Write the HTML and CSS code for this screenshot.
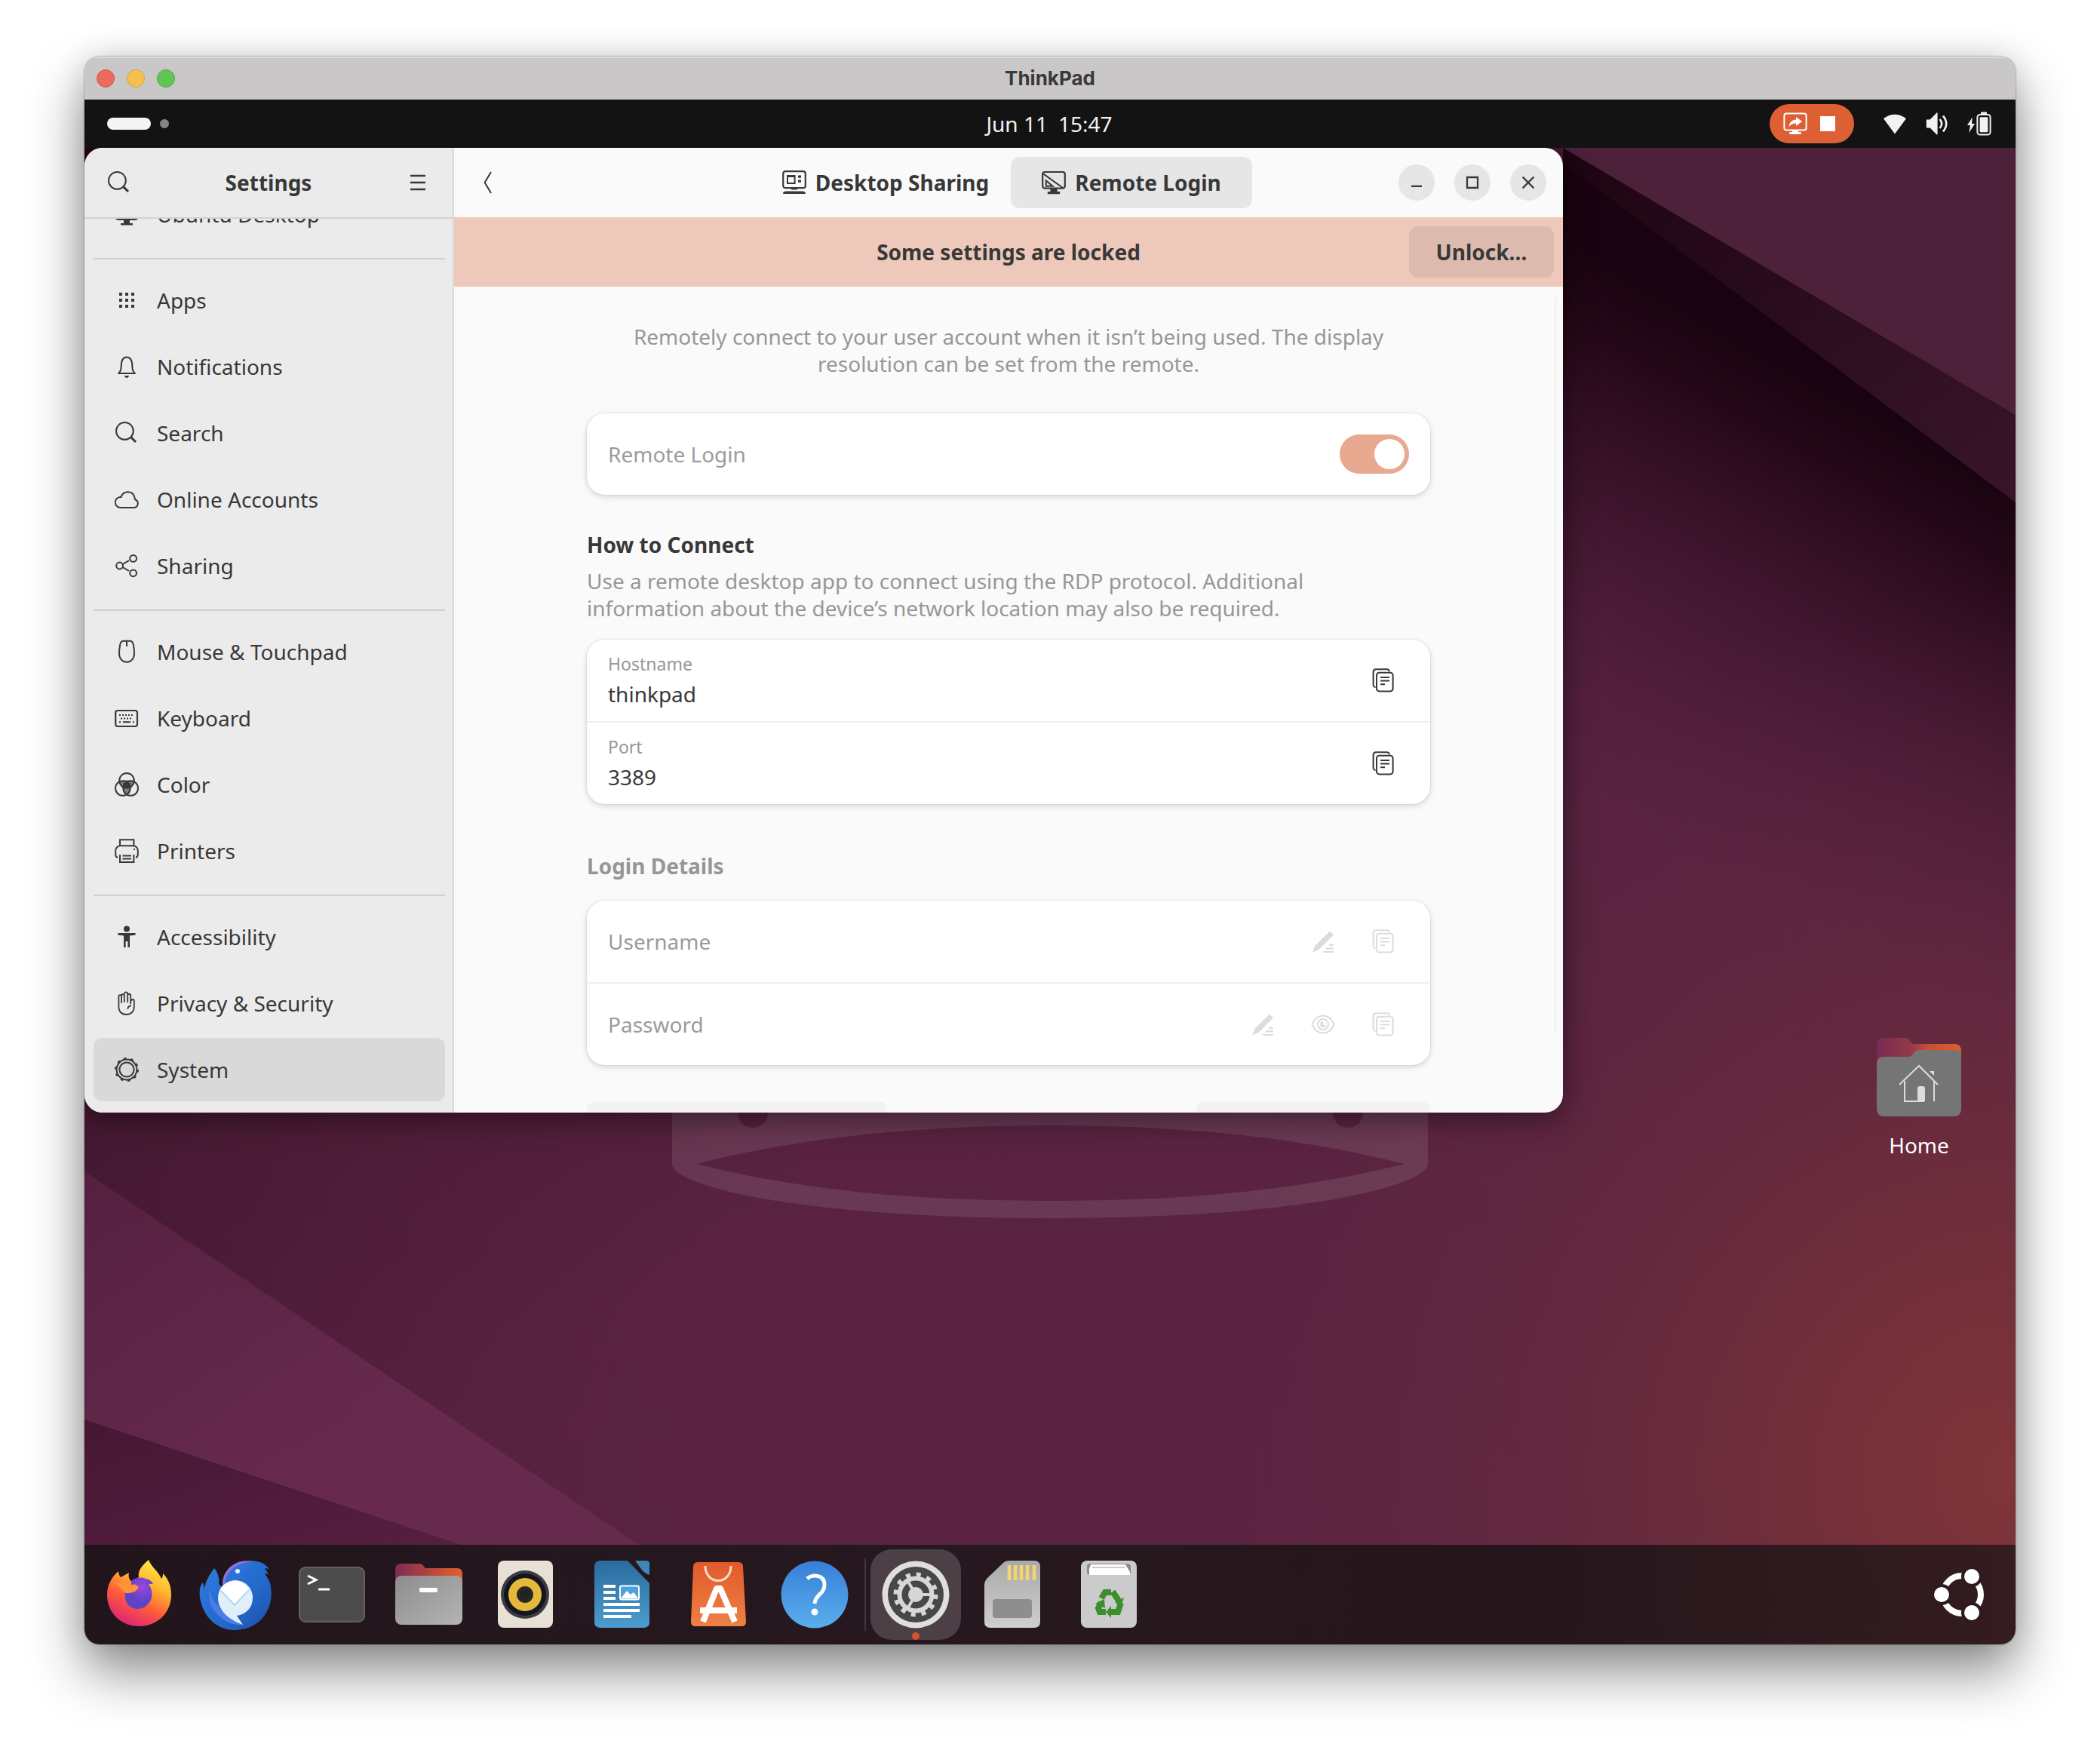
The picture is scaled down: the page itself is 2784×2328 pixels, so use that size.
FILE: index.html
```html
<!DOCTYPE html>
<html lang="en">
<head>
<meta charset="utf-8">
<title>ThinkPad</title>
<link rel="stylesheet" href="styles.css">
</head>
<body>
<svg class="defs" aria-hidden="true">
  <defs>
    <symbol id="i-search" viewBox="0 0 16 16"><circle cx="6.7" cy="6.7" r="5.7" fill="none" stroke="currentColor"/><path d="M10.8 10.8 14 14" stroke="currentColor" stroke-width="1.5"/></symbol>
    <symbol id="i-screen" viewBox="0 0 16 16"><path d="M2.5 1.5h11a1.5 1.5 0 0 1 1.500 1.500v7a1.500 1.500 0 0 1-1.500 1.500h-11A1.500 1.500 0 0 1 1 10V3a1.500 1.500 0 0 1 1.500-1.500z" fill="none" stroke="currentColor"/><path d="M1 9.500h14v2H1zM6 12h4v2h2v1.300H4V14h2z" fill="currentColor"/></symbol>
    <symbol id="i-copy" viewBox="0 0 16 16"><rect x="3.500" y="2.900" width="10.800" height="12.300" rx="1.700" fill="none" stroke="currentColor"/><path d="M2.800 12.500A1.500 1.500 0 0 1 1.300 11V2.300A1.800 1.800 0 0 1 3 .6h7.300a1.600 1.600 0 0 1 1.600 1.500" fill="none" stroke="currentColor"/><path d="M6 6h6M6 8.300h6M6 10.600h3" stroke="currentColor"/></symbol>
    <symbol id="i-edit" viewBox="0 0 16 16"><path d="M12.500 1.200 15 3.600 5.500 13.300 1 15.400 2.700 10.900z" fill="currentColor"/><path d="M8 15h7M10 12.700h5M12 10.400h3" stroke="currentColor" stroke-width="1.100"/></symbol>
  </defs>
</svg>

<main class="stage">
<section class="remote" aria-label="Remote screen">
  <header class="titlebar">
    <div class="lights">
      <button class="light light-red" aria-label="Close"></button>
      <button class="light light-yellow" aria-label="Minimize"></button>
      <button class="light light-green" aria-label="Zoom"></button>
    </div>
    <h1 class="titlebar-name">ThinkPad</h1>
    <div></div>
  </header>

  <div class="topbar">
    <button class="workspaces" aria-label="Activities"><span class="pill"></span><span class="dot"></span></button>
    <button class="clock"><span>Jun 11</span><span>15:47</span></button>
    <div class="status">
      <button class="sharing" aria-label="Stop screen sharing">
        <svg class="icon" viewBox="0 0 16 16"><rect x=".7" y="1.200" width="14.600" height="11" rx="1.500" fill="none" stroke="#fff"/><path d="M6 12h4v1.500h1.800V15H4.200v-1.500H6z" fill="#fff"/><path d="M8.500 3.500 12.500 6.500 8.500 9.500V7.800C6.300 7.800 5 8.500 3.800 10.200 4 7.300 5.600 5.400 8.500 5.200z" fill="#fff"/></svg>
        <span class="stop"></span>
      </button>
      <button class="tray" aria-label="System menu">
        <svg class="icon" viewBox="0 0 16 16"><path d="M8 14.700.5 4.600Q8-.8 15.500 4.600z" fill="#f2f2f2"/></svg>
        <svg class="icon" viewBox="0 0 16 16"><path d="M1.200 5.500h2.300L8 1v14l-4.500-4.500H1.200z" fill="#f2f2f2" stroke="#f2f2f2" stroke-width=".6" stroke-linejoin="round"/><path d="M9.800 5q2.600 3 0 6M12 2.800q4.200 5.200 0 10.400" fill="none" stroke="#f2f2f2" stroke-width="1.300"/></svg>
        <svg class="icon" viewBox="0 0 16 16"><path d="M3.400 3.800 0 9h2l-.8 5L5 8H3z" fill="#f2f2f2"/><rect x="6.700" y="2" width="8.600" height="13.300" rx="1.800" fill="none" stroke="#f2f2f2"/><rect x="8.300" y="3.600" width="5.400" height="10" rx=".6" fill="#f2f2f2"/><path d="M9 .3h4v1.300H9z" fill="#f2f2f2"/></svg>
      </button>
    </div>
  </div>

  <div class="desktop">
    <svg class="wallpaper" viewBox="0 0 2560 1852" preserveAspectRatio="none" aria-hidden="true">
      <defs>
        <linearGradient id="w-base" x1="0" y1="0" x2="1" y2="1"><stop offset="0" stop-color="#2a0318"/><stop offset=".32" stop-color="#45182f"/><stop offset=".55" stop-color="#582240"/><stop offset="1" stop-color="#5c2643"/></linearGradient>
        <radialGradient id="w-warm" gradientUnits="userSpaceOnUse" cx="2560" cy="1760" r="1150"><stop offset="0" stop-color="#803539"/><stop offset=".25" stop-color="#763139" stop-opacity=".85"/><stop offset="1" stop-color="#5a2440" stop-opacity="0"/></radialGradient>
        <linearGradient id="w-deep" gradientUnits="userSpaceOnUse" x1="2300" y1="300" x2="1980" y2="860"><stop offset="0" stop-color="#190310"/><stop offset=".15" stop-color="#1f0513" stop-opacity=".9"/><stop offset=".6" stop-color="#3a122a" stop-opacity=".5"/><stop offset="1" stop-color="#4a1a35" stop-opacity="0"/></linearGradient>
        <linearGradient id="w-left" gradientUnits="userSpaceOnUse" x1="0" y1="1300" x2="700" y2="1150"><stop offset="0" stop-color="#3f1530" stop-opacity=".35"/><stop offset="1" stop-color="#582240" stop-opacity="0"/></linearGradient>
        <linearGradient id="w-tri" x1="0" y1="0" x2="1" y2="1"><stop offset="0" stop-color="#552040"/><stop offset=".6" stop-color="#672a4e"/><stop offset="1" stop-color="#662a4d"/></linearGradient>
        <linearGradient id="w-tri2" x1="0" y1="0" x2="1" y2="1"><stop offset="0" stop-color="#451733"/><stop offset="1" stop-color="#571f41"/></linearGradient>
        <linearGradient id="w-band" x1="0" y1="0" x2="1" y2="1"><stop offset="0" stop-color="#1e0412"/><stop offset=".6" stop-color="#2d0f20"/><stop offset="1" stop-color="#3a152a"/></linearGradient>
      </defs>
      <rect width="2560" height="1852" fill="url(#w-base)"/>
      <path d="M1960 0H2560V1300L1960 900z" fill="url(#w-deep)"/>
      <rect width="2560" height="1852" fill="url(#w-warm)"/>
      <rect y="1000" width="1000" height="852" fill="url(#w-left)"/>
      <path d="M1960 0H2560V470L1960 20z" fill="url(#w-band)"/>
      <path d="M1960 0H2560V354z" fill="#4e213b"/>
      <path d="M0 1357 735 1852H0z" fill="url(#w-tri)"/>
      <path d="M0 1686 500 1852H0z" fill="url(#w-tri2)"/>
      <path fill="#fff" fill-opacity=".1" fill-rule="evenodd" d="M779 1200H1781V1347C1781 1375 1620 1419 1280 1419S779 1375 779 1347zM812 1347C960 1385 1120 1396 1280 1396S1600 1385 1750 1347C1600 1309 1440 1296 1280 1296S960 1309 812 1347zM866 1279a20 20 0 0 0 40 0 20 20 0 0 0-40 0zM1655 1279a20 20 0 0 0 40 0 20 20 0 0 0-40 0z"/>
    </svg>

    <section class="settings" aria-label="Settings">
      <aside class="sidebar">
        <header class="side-head">
          <button class="flat" aria-label="Search"><svg class="icon"><use href="#i-search"/></svg></button>
          <h2 class="side-title">Settings</h2>
          <button class="flat" aria-label="Menu"><svg class="icon" viewBox="0 0 16 16"><path d="M3 3.500h10M3 8h10M3 12.500h10" stroke="currentColor" stroke-width="1.200"/></svg></button>
        </header>
        <nav class="nav">
          <a class="nav-row" href="#"><svg class="icon"><use href="#i-screen"/></svg>Ubuntu Desktop</a>
          <hr class="rule">
          <a class="nav-row" href="#"><svg class="icon" viewBox="0 0 16 16"><path d="M3 3h2v2H3zM7 3h2v2H7zM11 3h2v2h-2zM3 7h2v2H3zM7 7h2v2H7zM11 7h2v2h-2zM3 11h2v2H3zM7 11h2v2H7zM11 11h2v2h-2z" fill="currentColor"/></svg>Apps</a>
          <a class="nav-row" href="#"><svg class="icon" viewBox="0 0 16 16"><path d="M2.500 12.500h11c-1.300-1-1.800-2.300-1.800-4.500C11.700 4 10.500 1.700 8 1.700S4.300 4 4.300 8c0 2.200-.5 3.500-1.800 4.500z" fill="none" stroke="currentColor" stroke-linejoin="round"/><path d="M6.300 14h3.400Q9 15.600 8 15.600T6.300 14z" fill="currentColor"/></svg>Notifications</a>
          <a class="nav-row" href="#"><svg class="icon"><use href="#i-search"/></svg>Search</a>
          <a class="nav-row" href="#"><svg class="icon" viewBox="0 0 16 16"><path d="M3.500 13.500h9.200a2.800 2.800 0 0 0 .9-5.400C13.300 7.500 13.300 7 13 6a4.600 4.600 0 0 0-8.700.5 3.500 3.500 0 0 0-.8 7z" fill="none" stroke="currentColor"/></svg>Online Accounts</a>
          <a class="nav-row" href="#"><svg class="icon" viewBox="0 0 16 16"><g fill="none" stroke="currentColor"><circle cx="3.300" cy="8" r="2.200"/><circle cx="12.300" cy="3.200" r="2.200"/><circle cx="12.300" cy="12.900" r="2.200"/><path d="M5.300 7 9.500 4.600M5.300 9l4.200 2.400"/></g></svg>Sharing</a>
          <hr class="rule">
          <a class="nav-row" href="#"><svg class="icon" viewBox="0 0 16 16"><path d="M5.700.9h4.600c1.500 0 2 1 2.300 3.500.3 2 .4 3.200.4 5a5 5.500 0 0 1-10 0c0-1.800.1-3 .4-5C3.700 1.900 4.200.9 5.700.9z" fill="none" stroke="currentColor"/><path d="M8 1v3.500" stroke="currentColor"/></svg>Mouse &amp; Touchpad</a>
          <a class="nav-row" href="#"><svg class="icon" viewBox="0 0 16 16"><rect x=".6" y="3" width="14.400" height="10.500" rx="1.500" fill="none" stroke="currentColor" stroke-width="1.100"/><path d="M3 6h10M4 8.300h8M3 10.600h1M12 10.600h1" stroke="currentColor" stroke-dasharray="1 1"/><path d="M5.500 10.600h5" stroke="currentColor"/></svg>Keyboard</a>
          <a class="nav-row" href="#"><svg class="icon" viewBox="0 0 16 16"><path d="M3.500 6.200Q8 4 12.500 6.200L10.800 10.500 10 14H6l-.8-3.500z" fill="currentColor" fill-opacity=".6"/><path d="M5.500 7h5L9.500 10.500h-3z" fill="currentColor"/><g fill="none" stroke="currentColor"><circle cx="8" cy="5.400" r="4.900"/><circle cx="5.400" cy="10.500" r="4.900"/><circle cx="10.600" cy="10.500" r="4.900"/></g></svg>Color</a>
          <a class="nav-row" href="#"><svg class="icon" viewBox="0 0 16 16"><g fill="none" stroke="currentColor"><path d="M3.500 4.500V.6h9.200v3.900M2 12.500C1 12.200.6 11.500.6 10.500V8A3.300 3.300 0 0 1 3.600 4.600h8.800a3.300 3.300 0 0 1 3 3.400v2.500c0 1-.4 1.700-1.400 2M3.500 10.500v5h9.200v-5M5.200 11.300h5.800M5.200 13.300h5.800"/></g><path d="M12.500 6.500h1v1h-1z" fill="currentColor"/></svg>Printers</a>
          <hr class="rule">
          <a class="nav-row" href="#"><svg class="icon" viewBox="0 0 16 16"><circle cx="8" cy="2.800" r="2" fill="currentColor"/><path d="M2.200 5.500h11.600v1.200L10 7.300V15H8.700v-4H7.300v4H6V7.300l-3.800-.6z" fill="currentColor"/></svg>Accessibility</a>
          <a class="nav-row" href="#"><svg class="icon" viewBox="0 0 16 16"><path d="M4.500 8V3.500a.9.900 0 0 0-1.800 0v7c0 3 2 5 5 5s5.200-2 5.200-5V6.500c0-1.400-1.700-1.400-1.700 0M4.500 3.300c0-1.600 1.900-1.600 1.900 0V7.500M6.400 2c0-1.700 2.200-1.700 2.200 0v5.500M8.600 3c0-1.500 2-1.500 2 0V8.500M11 9.500c-1.500.3-2.200 1-2.400 2.300" fill="none" stroke="currentColor" stroke-width=".9"/></svg>Privacy &amp; Security</a>
          <a class="nav-row nav-row-active" href="#" aria-current="page"><svg class="icon" viewBox="0 0 16 16"><g fill="none" stroke="currentColor"><circle cx="8" cy="8" r="4.800"/><circle cx="8" cy="8" r="6.700"/><circle cx="8" cy="8" r="7.300" stroke-width="1.400" stroke-dasharray="1.800 2.790"/></g></svg>System</a>
        </nav>
      </aside>

      <div class="panel">
        <header class="panel-head">
          <button class="flat" aria-label="Back"><svg class="icon" viewBox="0 0 16 16"><path d="M10.500 1 6.300 8l4.200 7" fill="none" stroke="currentColor"/></svg></button>
          <div class="tabs" role="tablist">
            <button class="tab" role="tab"><svg class="icon" viewBox="0 0 16 16"><rect x=".6" y=".6" width="14.800" height="11" rx="1.500" fill="none" stroke="currentColor" stroke-width="1.100"/><path d="M3 3h5.800v6H3zM4 4.500V8h3.800V4.500z" fill="currentColor" fill-rule="evenodd"/><path d="M10.500 3.200h2v1.700h-2zM10.500 6.200h2v1.700h-2zM6 11.800h4v1H6zM.5 15.500q0-1.800 2-1.800h11q2 0 2 1.800z" fill="currentColor"/></svg>Desktop Sharing</button>
            <button class="tab tab-active" role="tab" aria-selected="true"><svg class="icon" viewBox="0 0 16 16"><rect x=".6" y="1" width="14.800" height="10.800" rx="1.500" fill="none" stroke="currentColor" stroke-width="1.100"/><path d="M1.200 2.300 14 11.500" stroke="currentColor"/><path d="M2.900 6.700v3.700h4.400z" fill="none" stroke="currentColor"/><path d="M5.700 12h4.600v2h1.800v1.600H3.900V14h1.800z" fill="currentColor"/></svg>Remote Login</button>
          </div>
          <div class="controls">
            <button class="control" aria-label="Minimize"><svg class="icon icon-small" viewBox="0 0 16 16"><path d="M4 10.800h8" stroke="currentColor" stroke-width="1.300"/></svg></button>
            <button class="control" aria-label="Maximize"><svg class="icon icon-small" viewBox="0 0 16 16"><path d="M4 4h8v8H4z" fill="none" stroke="currentColor" stroke-width="1.300"/></svg></button>
            <button class="control" aria-label="Close"><svg class="icon icon-small" viewBox="0 0 16 16"><path d="m3.800 3.800 8.400 8.400M12.200 3.800l-8.400 8.400" stroke="currentColor" stroke-width="1.300"/></svg></button>
          </div>
        </header>

        <div class="banner">
          <p class="banner-text">Some settings are locked</p>
          <button class="unlock">Unlock…</button>
        </div>

        <div class="content">
          <p class="intro">Remotely connect to your user account when it isn’t being used. The display resolution can be set from the remote.</p>

          <div class="card">
            <div class="row">
              <label class="row-label" for="remote-login">Remote Login</label>
              <input class="switch" id="remote-login" type="checkbox" checked disabled>
            </div>
          </div>

          <h3 class="group-title">How to Connect</h3>
          <p class="group-text">Use a remote desktop app to connect using the RDP protocol. Additional information about the device’s network location may also be required.</p>
          <div class="card">
            <div class="row">
              <div class="pair"><span class="pair-key">Hostname</span><span class="pair-value">thinkpad</span></div>
              <button class="act" aria-label="Copy hostname"><svg class="icon"><use href="#i-copy"/></svg></button>
            </div>
            <div class="row">
              <div class="pair"><span class="pair-key">Port</span><span class="pair-value">3389</span></div>
              <button class="act" aria-label="Copy port"><svg class="icon"><use href="#i-copy"/></svg></button>
            </div>
          </div>

          <h3 class="group-title group-title-off">Login Details</h3>
          <div class="card">
            <div class="row">
              <label class="row-label" for="username">Username</label>
              <input class="entry" id="username" type="text" disabled>
              <button class="act" disabled aria-label="Edit username"><svg class="icon"><use href="#i-edit"/></svg></button>
              <button class="act" disabled aria-label="Copy username"><svg class="icon"><use href="#i-copy"/></svg></button>
            </div>
            <div class="row">
              <label class="row-label" for="password">Password</label>
              <input class="entry" id="password" type="password" disabled>
              <button class="act" disabled aria-label="Edit password"><svg class="icon"><use href="#i-edit"/></svg></button>
              <button class="act" disabled aria-label="Show password"><svg class="icon" viewBox="0 0 16 16"><g fill="none" stroke="currentColor"><path d="M.7 8C2.200 4.500 4.800 2.200 8 2.200S13.800 4.500 15.300 8C13.800 11.500 11.200 13.800 8 13.800S2.200 11.500.7 8z"/><circle cx="8" cy="8" r="3.500"/></g><path d="M8 6v2.500h2A2 2 0 1 1 8 6z" fill="currentColor"/></svg></button>
              <button class="act" disabled aria-label="Copy password"><svg class="icon"><use href="#i-copy"/></svg></button>
            </div>
          </div>

          <div class="foot">
            <button class="foot-button foot-wide" disabled aria-label="Verify encryption"></button>
            <button class="foot-button" disabled aria-label="Generate password"></button>
          </div>
        </div>
      </div>
    </section>

    <a class="home" href="#">
      <svg class="home-icon" viewBox="0 0 112 104" aria-hidden="true">
        <defs><linearGradient id="h-back"><stop offset="0" stop-color="#7a2b52"/><stop offset=".4" stop-color="#92384a"/><stop offset=".6" stop-color="#c64f35"/><stop offset="1" stop-color="#dd5e2c"/></linearGradient></defs>
        <path d="M8 0H38Q42 0 44 4L48 8H104Q112 8 112 18V40H0V10Q0 0 8 0z" fill="url(#h-back)"/>
        <path d="M10 25H42Q47 24 50 19 52 16 56 16H104Q112 16 112 24V94Q112 104 102 104H10Q0 104 0 94V34Q0 25 10 25z" fill="#757575"/>
        <path d="M30 62 56 37 81 62M37 57V84H63M76 57V84" fill="none" stroke="#dcdcdc" stroke-width="2"/>
        <path d="M54 84V67Q54 64 57 64H61Q64 64 64 67V84zM70 44H76V50z" fill="#dcdcdc"/>
      </svg>
      <span>Home</span>
    </a>
  </div>

  <footer class="dock">
    <div class="dock-group">
      <button class="app" aria-label="Firefox"><svg class="app-icon" viewBox="0 0 96 96"><defs><linearGradient id="ff1" x1=".8" y1="0" x2=".3" y2="1"><stop offset="0" stop-color="#fff04a"/><stop offset=".35" stop-color="#ffb52e"/><stop offset=".65" stop-color="#ff5a3c"/><stop offset="1" stop-color="#dd2277"/></linearGradient><radialGradient id="ff2" cx=".6" cy=".3"><stop offset="0" stop-color="#a044e0"/><stop offset="1" stop-color="#5a44c8"/></radialGradient></defs><path d="M61 2C65 12 74 17 78 27 80 25 80 22 80 20 88 28 91 38 91 48 91 73 72 90 48 90S6 72 6 48C6 34 13 24 21 17 21 20 22 23 24 25L35 19C34 24 35 28 38 30 44 27 47 27 48 24 46 16 54 8 61 2z" fill="url(#ff1)"/><path d="M38 30Q47 23 57 27 64 28 67 34L61 34Q68 44 64 55 58 67 47 67C34 67 28 56 30 45Q42 45 48 39 45 33 38 35z" fill="url(#ff2)"/><path d="M18 33Q30 31 38 36 45 38 47 40 44 45 35 46 30 47 28 43z" fill="#ff9434"/></svg></button>
      <button class="app" aria-label="Thunderbird"><svg class="app-icon" viewBox="0 0 96 96"><defs><linearGradient id="tb" x1="0" y1="0" x2="1" y2="1"><stop offset="0" stop-color="#2f7ce0"/><stop offset=".6" stop-color="#2468cc"/><stop offset="1" stop-color="#1d4ea8"/></linearGradient></defs><path d="M31 38C34 14 54 0 76 4 84 5 89 9 93 14L87 13 92 21 87 20 93 30C97 40 97 58 90 70 82 86 66 95 47 95 22 95 5 76 1 52 0 42 1 36 5 32L7 40C9 28 15 20 20 13 26 20 27 28 26 34z" fill="url(#tb)"/><path d="M31 36C30 14 50 0 70 4 52 7 42 16 38 34z" fill="#8f6fe0"/><path d="M34 36C34 18 50 5 70 5 60 14 58 24 50 30z" fill="#2c73d8"/><path d="M48 29A23 23 0 0 1 71 52C71 66 62 74 50 76L58 88C42 84 25 70 25 52A23 23 0 0 1 48 29z" fill="#e1effc"/><path d="M28 41 47 60 66 41Q60 31 48 30 34 31 28 41z" fill="#fff"/><path d="M29 43 47 62 66 42" fill="none" stroke="#b9d4f2" stroke-width="2"/><path d="M14 42Q10 62 26 76 40 90 58 88 36 80 26 64 16 54 14 42z" fill="#4a7ee4"/><circle cx="51" cy="17" r="3" fill="#e8f3fd"/></svg></button>
      <button class="app" aria-label="Terminal"><svg class="app-icon" viewBox="0 0 96 96"><rect x="5" y="12" width="86" height="72" rx="8" fill="#4c4c4c" stroke="#626262" stroke-width="2"/><path d="M16 23 27 28.500 16 34" fill="none" stroke="#fff" stroke-width="3"/><path d="M30 41H45" stroke="#fff" stroke-width="3"/></svg></button>
      <button class="app" aria-label="Files"><svg class="app-icon" viewBox="0 0 96 96"><defs><linearGradient id="fb"><stop offset="0" stop-color="#7d2b52"/><stop offset=".5" stop-color="#b2453d"/><stop offset="1" stop-color="#e4602c"/></linearGradient><linearGradient id="fg" x2="1" y2="1"><stop offset="0" stop-color="#8d8d8d"/><stop offset="1" stop-color="#b4b4b4"/></linearGradient></defs><path d="M12 7H36Q40 7 42 11L44 13H86Q93 13 93 21V40H4V15Q4 7 12 7z" fill="url(#fb)"/><rect x="4" y="23" width="89" height="65" rx="8" fill="url(#fg)"/><rect x="36" y="39" width="24" height="6" rx="2" fill="#fff"/></svg></button>
      <button class="app" aria-label="Rhythmbox"><svg class="app-icon" viewBox="0 0 96 96"><rect x="12" y="3" width="73" height="89" rx="8" fill="#e6e1d4"/><circle cx="48" cy="48" r="32" fill="#3a3b42"/><circle cx="48" cy="48" r="28" fill="#14161f"/><circle cx="48" cy="48" r="22" fill="#e6b93c"/><circle cx="48" cy="48" r="11" fill="#2a2a22"/><circle cx="48" cy="48" r="7" fill="#222"/></svg></button>
      <button class="app" aria-label="LibreOffice Writer"><svg class="app-icon" viewBox="0 0 96 96"><defs><linearGradient id="lw" x2="0" y2="1"><stop offset="0" stop-color="#2a6b9e"/><stop offset="1" stop-color="#4c9dcf"/></linearGradient></defs><path d="M20 3H56L85 33V84Q85 92 77 92H20Q12 92 12 84V11Q12 3 20 3z" fill="url(#lw)"/><path d="M66 3H81Q85 3 85 7V22Q78 20 74 14z" fill="#3f86b8"/><path d="M24 37H40M24 45H40M24 53H40M24 61H72M24 69H72M24 77H61" stroke="#fff" stroke-width="4"/><rect x="46" y="36.500" width="25" height="18" rx="2" fill="#4aa3dc" stroke="#fff" stroke-width="2"/><path d="M47 53 55 43 60 48 64 45 70 53z" fill="#fff"/></svg></button>
      <button class="app" aria-label="App Center"><svg class="app-icon" viewBox="0 0 96 96"><defs><linearGradient id="ac" x2="0" y2="1"><stop offset="0" stop-color="#e25a2a"/><stop offset="1" stop-color="#ee8145"/></linearGradient></defs><path d="M21 5H75Q81 5 81 11L85 84Q85 90 79 90H18Q12 90 12 84L15 11Q15 5 21 5z" fill="url(#ac)"/><path d="M31 10C31 36 65 36 65 10" fill="none" stroke="#f8dccf" stroke-width="3"/><path d="M28 84 46 40H51L70 84M24 69H73" fill="none" stroke="#fff" stroke-width="8" stroke-linejoin="round"/></svg></button>
      <button class="app" aria-label="Help"><svg class="app-icon" viewBox="0 0 96 96"><defs><linearGradient id="hp" x2="0" y2="1"><stop offset="0" stop-color="#387fd8"/><stop offset="1" stop-color="#5aaeee"/></linearGradient></defs><circle cx="48" cy="48" r="44.500" fill="url(#hp)"/><path d="M38 27C45 21 61 21 61 35 61 48 49 47 48 60" fill="none" stroke="#fff" stroke-width="5"/><circle cx="48" cy="71" r="4.500" fill="#fff"/></svg></button>
    </div>
    <span class="dock-rule"></span>
    <div class="dock-group">
      <button class="app app-active" aria-label="Settings"><svg class="app-icon" viewBox="0 0 96 96"><circle cx="48" cy="48" r="44.500" fill="#dedede"/><circle cx="48" cy="48" r="37" fill="#474747"/><circle cx="48" cy="48" r="21.500" fill="none" stroke="#d6d6d6" stroke-width="6"/><circle cx="48" cy="48" r="26.500" fill="none" stroke="#d6d6d6" stroke-width="6" stroke-dasharray="6 7.875"/><circle cx="48" cy="48" r="10" fill="#d6d6d6"/><path d="M48 48H68M48 48 38 31M48 48 38 65" stroke="#d6d6d6" stroke-width="4"/></svg></button>
      <button class="app" aria-label="SD card"><svg class="app-icon" viewBox="0 0 96 96"><defs><linearGradient id="sd" x2="0" y2="1"><stop offset="0" stop-color="#a9a9a9"/><stop offset="1" stop-color="#cfcfcf"/></linearGradient></defs><path d="M44 3H77Q85 3 85 11V84Q85 92 77 92H19Q11 92 11 84V36Q11 30 15 26L36 6Q39 3 44 3z" fill="url(#sd)"/><path d="M44 9V29M52 9V29M60 9V29M68 9V29M77 9V29" stroke="#f7d56c" stroke-width="4.500"/><rect x="22" y="54" width="52" height="25" rx="4" fill="#8e8e8e"/></svg></button>
      <button class="app" aria-label="Trash"><svg class="app-icon" viewBox="0 0 96 96"><rect x="11" y="3" width="74" height="89" rx="8" fill="#cbcbcb"/><rect x="19" y="7" width="58" height="15" rx="4" fill="#8b8b8b"/><path d="M24 8H70L76 18V22H22V14z" fill="#fff"/><path d="M26 12H70" stroke="#bdbdbd" stroke-width="1.500"/><g fill="none" stroke="#3d8f2c" stroke-width="8"><path d="M38 53 43 45H51M53 44 61 56"/><path d="M64 59 60 71H50"/><path d="M44 71H36L34 66 38 58"/></g><path d="M56 58 68 52 64 64zM51 63V79L44 71zM30 60 42 54 43 66z" fill="#3d8f2c"/></svg></button>
    </div>
    <button class="app app-end" aria-label="Show apps"><svg class="ubuntu" viewBox="0 0 72 72"><circle cx="39" cy="36" r="25" fill="none" stroke="#fff" stroke-width="8"/><g fill="#fff" stroke="#2e1a1e" stroke-width="4"><circle cx="12" cy="36" r="12"/><circle cx="52" cy="12" r="12"/><circle cx="52" cy="60" r="12"/></g></svg></button>
  </footer>
</section>
</main>
</body>
</html>
```
FILE: styles.css
```css
* { box-sizing: border-box; }

body {
  margin: 0;
  background: #fff;
  color: #383838;
  font: 28px/36px "Noto Sans", "Open Sans", sans-serif;
}

h1, h2, h3, p { margin: 0; font-size: inherit; line-height: inherit; }

button {
  display: flex;
  align-items: center;
  justify-content: center;
  padding: 0;
  border: 0;
  background: none;
  color: inherit;
  font: inherit;
}

a { color: inherit; text-decoration: none; }

.defs { position: absolute; width: 0; height: 0; }
.icon { width: 32px; height: 32px; flex: none; }
.icon-small { width: 28px; height: 28px; }

.stage {
  display: flex;
  min-height: 100vh;
  padding: 75px 112px 148px;
}

.remote {
  display: flex;
  flex: 1;
  flex-direction: column;
  overflow: hidden;
  border-radius: 20px;
  box-shadow: 0 0 2px rgba(0, 0, 0, .6), 0 36px 72px rgba(0, 0, 0, .46), 0 0 40px rgba(0, 0, 0, .12);
}

/* Window title bar */
.titlebar {
  display: grid;
  grid-template-columns: 1fr auto 1fr;
  align-items: center;
  height: 57px;
  padding: 0 16px 2px;
  background: #c9c7c8;
  border-top: 2px solid #dcdbdb;
}

.lights { display: flex; gap: 16px; }
.light { width: 24px; height: 24px; border-radius: 50%; }
.light-red { background: #ed6a5e; border: 1px solid #d5574c; }
.light-yellow { background: #f5bf4f; border: 1px solid #d9a33d; }
.light-green { background: #61c554; border: 1px solid #4fa943; }

.titlebar-name { font: 700 26px/32px Inter, sans-serif; color: #3a3939; }

/* Top bar */
.topbar {
  display: grid;
  grid-template-columns: 1fr auto 1fr;
  align-items: center;
  height: 64px;
  padding: 0 32px 0 30px;
  background: #131313;
  color: #f2f2f2;
}

.workspaces { justify-self: start; gap: 12px; }
.pill { width: 58px; height: 16px; border-radius: 8px; background: #f4f4f4; }
.dot { width: 12px; height: 12px; border-radius: 50%; background: #868686; }
.clock { gap: 14px; }
.status { display: flex; justify-self: end; align-items: center; gap: 38px; }

.sharing {
  justify-content: flex-start;
  gap: 17px;
  width: 112px;
  height: 52px;
  padding-left: 18px;
  border-radius: 26px;
  background: #dd5f34;
}

.stop { width: 20px; height: 20px; background: #fff; }
.tray { gap: 24px; }

/* Desktop */
.desktop { position: relative; flex: 1; background: #582240; overflow: hidden; }
.wallpaper { position: absolute; inset: 0; width: 100%; height: 100%; }

.home {
  position: absolute;
  top: 1180px;
  right: 60px;
  display: flex;
  flex-direction: column;
  align-items: center;
  gap: 20px;
  width: 136px;
  color: #fff;
}

.home-icon { width: 112px; height: 104px; }

/* Settings window */
.settings {
  position: relative;
  display: grid;
  grid-template-columns: 490px 1fr;
  width: 76.5625%;
  height: 1279px;
  overflow: hidden;
  border-radius: 24px;
  background: #fafafa;
  box-shadow: 0 6px 40px rgba(0, 0, 0, .5);
}

.sidebar {
  display: flex;
  flex-direction: column;
  min-height: 0;
  background: #ebebeb;
  border-right: 2px solid #dadada;
}

.side-head {
  display: grid;
  flex: none;
  grid-template-columns: 68px 1fr 68px;
  align-items: center;
  height: 94px;
  padding: 0 12px;
  border-bottom: 2px solid #d2d2d2;
}

.flat { width: 68px; height: 68px; }
.side-title { text-align: center; font-weight: 700; }

.nav {
  display: flex;
  flex: 1;
  flex-direction: column;
  justify-content: flex-end;
  min-height: 0;
  overflow: hidden;
  padding: 0 10px 11px 12px;
}

.nav-row {
  display: flex;
  flex: none;
  align-items: center;
  gap: 24px;
  height: 84px;
  margin-bottom: 4px;
  padding: 0 28px;
  border-radius: 12px;
}

.nav-row-active { background: #d9d9d9; }

.rule {
  flex: none;
  width: 100%;
  height: 2px;
  margin: 12px 0;
  border: 0;
  background: #cfcfcf;
}

.panel { position: relative; display: flex; flex-direction: column; min-width: 0; min-height: 0; }

/* Overlay scrollbar trough */
.panel::after {
  content: "";
  position: absolute;
  top: 198px;
  right: 8px;
  bottom: 104px;
  width: 4px;
  border-radius: 2px;
  background: #f4f4f4;
}

.panel-head {
  display: grid;
  flex: none;
  grid-template-columns: 1fr auto 1fr;
  align-items: center;
  height: 92px;
  padding: 0 10px;
}

.tabs { display: flex; gap: 6px; }
.tab { gap: 12px; width: 320px; height: 68px; border-radius: 12px; font-weight: 700; }
.tab-active { background: #e6e6e6; }
.controls { display: flex; justify-self: end; gap: 26px; margin-right: 12px; }
.control { width: 48px; height: 48px; border-radius: 50%; background: #e6e6e6; }

.banner {
  display: grid;
  flex: none;
  grid-template-columns: 1fr auto 1fr;
  align-items: center;
  height: 92px;
  padding: 0 12px;
  background: #eec9bb;
  font-weight: 700;
}

.banner-text { grid-column: 2; }
.unlock { justify-self: end; width: 192px; height: 68px; border-radius: 12px; background: #dcbaae; }

.content {
  display: flex;
  flex: 1;
  flex-direction: column;
  width: 1118px;
  max-width: 100%;
  min-height: 0;
  margin: 0 auto;
  padding-top: 48px;
}

.intro {
  max-width: 1020px;
  margin: 0 auto 48px;
  color: #979797;
  text-align: center;
}

.card {
  flex: none;
  border-radius: 24px;
  background: #fff;
  box-shadow: 0 0 0 1px rgba(0, 0, 0, .04), 0 2px 6px 1px rgba(0, 0, 0, .1), 0 4px 12px rgba(0, 0, 0, .04);
}

.row {
  display: flex;
  align-items: center;
  gap: 12px;
  height: 108px;
  padding: 0 28px;
}

.row + .row { height: 110px; border-top: 2px solid #efefef; }
.row-label { flex: 1; color: #9b9b9b; }

.entry {
  width: 480px;
  min-width: 0;
  height: 68px;
  border: 0;
  background: none;
  font: inherit;
}

.switch {
  position: relative;
  width: 92px;
  height: 52px;
  margin: 0;
  border-radius: 26px;
  background: #e8a991;
  appearance: none;
}

.switch::before {
  content: "";
  position: absolute;
  top: 6px;
  right: 6px;
  width: 40px;
  height: 40px;
  border-radius: 50%;
  background: #fff;
}

.group-title { margin: 48px 0 12px; font-weight: 700; }
.group-title-off { margin: 64px 0 28px; color: #969696; }
.group-text { max-width: 1020px; margin-bottom: 24px; color: #979797; }

.pair { display: flex; flex: 1; flex-direction: column; gap: 4px; padding-bottom: 4px; }
.pair-key { color: #979797; font-size: 23px; }
.act { width: 68px; height: 68px; }
.act:disabled { color: #dcdcdc; }

.foot { display: flex; flex: none; justify-content: space-between; margin-top: 48px; }
.foot-button { width: 310px; height: 68px; border-radius: 12px; background: #f2f2f2; }
.foot-wide { width: 398px; }

/* Dock */
.dock {
  display: flex;
  align-items: center;
  gap: 6px;
  height: 132px;
  padding: 0 14px 0 12px;
  background: linear-gradient(90deg, #21151b, #26181e 45%, #25161c 75%, #341c1f);
}

.dock-group { display: flex; gap: 8px; }
.dock-rule { width: 2px; height: 96px; background: #43363c; }
.app { position: relative; width: 120px; height: 120px; border-radius: 28px; }
.app-icon { width: 96px; height: 96px; }
.app-active { background: #4c3f46; }

.app-active::after {
  content: "";
  position: absolute;
  bottom: 0;
  left: 55px;
  width: 10px;
  height: 10px;
  border-radius: 50%;
  background: #d4552a;
}

.app-end { margin-left: auto; }
.ubuntu { width: 72px; height: 72px; }
```
